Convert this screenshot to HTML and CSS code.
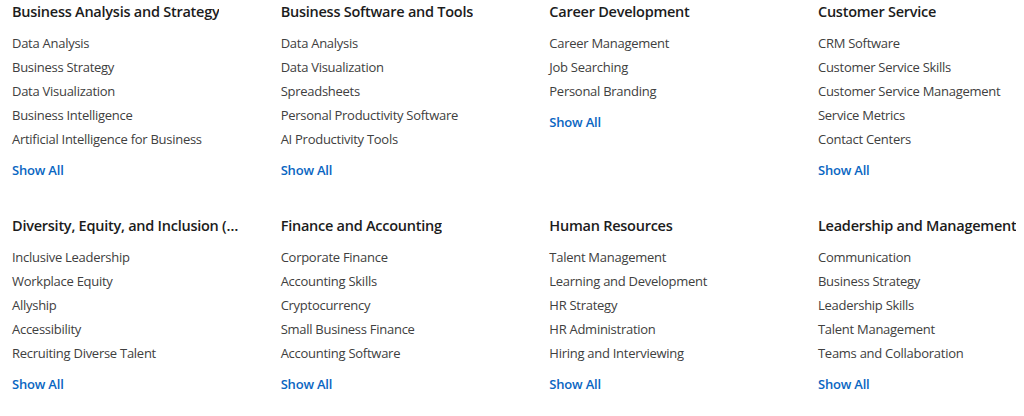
FILE: index.html
```html
<!DOCTYPE html>
<html lang="en">
<head>
<meta charset="utf-8">
<link rel="stylesheet" href="styles.css">
</head>
<body>
<div class="grid">
  <section class="col">
    <h3 class="title">Business Analysis and Strategy</h3>
    <ul class="list">
      <li>Data Analysis</li>
      <li>Business Strategy</li>
      <li>Data Visualization</li>
      <li>Business Intelligence</li>
      <li>Artificial Intelligence for Business</li>
    </ul>
    <a class="more" href="#">Show All</a>
  </section>
  <section class="col">
    <h3 class="title">Business Software and Tools</h3>
    <ul class="list">
      <li>Data Analysis</li>
      <li>Data Visualization</li>
      <li>Spreadsheets</li>
      <li>Personal Productivity Software</li>
      <li>AI Productivity Tools</li>
    </ul>
    <a class="more" href="#">Show All</a>
  </section>
  <section class="col">
    <h3 class="title">Career Development</h3>
    <ul class="list">
      <li>Career Management</li>
      <li>Job Searching</li>
      <li>Personal Branding</li>
    </ul>
    <a class="more" href="#">Show All</a>
  </section>
  <section class="col">
    <h3 class="title">Customer Service</h3>
    <ul class="list">
      <li>CRM Software</li>
      <li>Customer Service Skills</li>
      <li>Customer Service Management</li>
      <li>Service Metrics</li>
      <li>Contact Centers</li>
    </ul>
    <a class="more" href="#">Show All</a>
  </section>
  <section class="col">
    <h3 class="title">Diversity, Equity, and Inclusion (DEI)</h3>
    <ul class="list">
      <li>Inclusive Leadership</li>
      <li>Workplace Equity</li>
      <li>Allyship</li>
      <li>Accessibility</li>
      <li>Recruiting Diverse Talent</li>
    </ul>
    <a class="more" href="#">Show All</a>
  </section>
  <section class="col">
    <h3 class="title">Finance and Accounting</h3>
    <ul class="list">
      <li>Corporate Finance</li>
      <li>Accounting Skills</li>
      <li>Cryptocurrency</li>
      <li>Small Business Finance</li>
      <li>Accounting Software</li>
    </ul>
    <a class="more" href="#">Show All</a>
  </section>
  <section class="col">
    <h3 class="title">Human Resources</h3>
    <ul class="list">
      <li>Talent Management</li>
      <li>Learning and Development</li>
      <li>HR Strategy</li>
      <li>HR Administration</li>
      <li>Hiring and Interviewing</li>
    </ul>
    <a class="more" href="#">Show All</a>
  </section>
  <section class="col">
    <h3 class="title">Leadership and Management</h3>
    <ul class="list">
      <li>Communication</li>
      <li>Business Strategy</li>
      <li>Leadership Skills</li>
      <li>Talent Management</li>
      <li>Teams and Collaboration</li>
    </ul>
    <a class="more" href="#">Show All</a>
  </section>
</div>
</body>
</html>
```
FILE: styles.css
```css
html, body {
  margin: 0;
  padding: 0;
  background: #ffffff;
  overflow: hidden;
}
body {
  font-family: "Open Sans", "Noto Sans", sans-serif;
  width: 1024px;
  height: 416px;
}
.grid {
  display: grid;
  grid-template-columns: repeat(3, 232px) 206px;
  column-gap: 36.67px;
  padding-left: 12px;
}
.col {
  height: 214px;
  display: flex;
  flex-direction: column;
  align-items: flex-start;
  min-width: 0;
}
.title {
  margin: 0;
  padding-top: 1px;
  font-size: 14.5px;
  font-weight: 600;
  letter-spacing: -0.25px;
  line-height: 22px;
  color: #1c1c1c;
  white-space: nowrap;
  overflow: hidden;
  text-overflow: ellipsis;
  max-width: 230px;
}
.list {
  list-style: none;
  margin: 8px 0 0;
  padding: 0;
}
.list li {
  font-size: 13px;
  letter-spacing: -0.27px;
  line-height: 24px;
  color: #404040;
  white-space: nowrap;
}
.more {
  margin-top: 7px;
  font-size: 13px;
  font-weight: 600;
  letter-spacing: -0.2px;
  line-height: 24px;
  color: #0a66c2;
  text-decoration: none;
}
```
